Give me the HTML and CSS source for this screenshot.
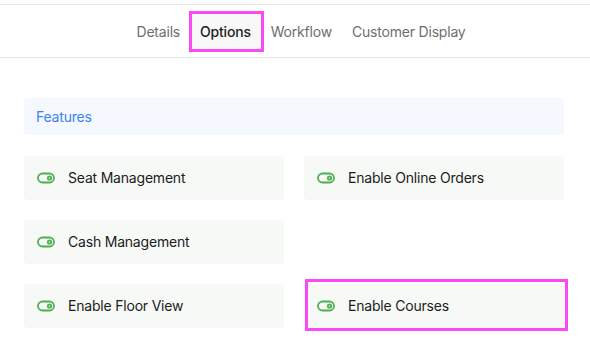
FILE: index.html
```html
<!DOCTYPE html>
<html lang="en">
<head>
    <meta charset="UTF-8">
    <meta name="viewport" content="width=device-width, initial-scale=1.0">
    <title>Options</title>
    <link rel="stylesheet" href="styles.css">
</head>
<body>
    <nav class="tabs">
        <span class="tab">Details</span>
        <span class="tab active">Options<span class="mark"></span></span>
        <span class="tab">Workflow</span>
        <span class="tab">Customer Display</span>
    </nav>

    <main class="content">
        <div class="section-title">Features</div>

        <div class="features">
            <div class="feature">
                <svg class="toggle" viewBox="0 0 18 12"><rect x="1" y="1.5" width="16" height="9" rx="4.5"/><circle cx="12.5" cy="6" r="1.7"/></svg>
                <span>Seat Management</span>
            </div>
            <div class="feature">
                <svg class="toggle" viewBox="0 0 18 12"><rect x="1" y="1.5" width="16" height="9" rx="4.5"/><circle cx="12.5" cy="6" r="1.7"/></svg>
                <span>Enable Online Orders</span>
            </div>
            <div class="feature">
                <svg class="toggle" viewBox="0 0 18 12"><rect x="1" y="1.5" width="16" height="9" rx="4.5"/><circle cx="12.5" cy="6" r="1.7"/></svg>
                <span>Cash Management</span>
            </div>
            <div class="empty"></div>
            <div class="feature">
                <svg class="toggle" viewBox="0 0 18 12"><rect x="1" y="1.5" width="16" height="9" rx="4.5"/><circle cx="12.5" cy="6" r="1.7"/></svg>
                <span>Enable Floor View</span>
            </div>
            <div class="feature">
                <svg class="toggle" viewBox="0 0 18 12"><rect x="1" y="1.5" width="16" height="9" rx="4.5"/><circle cx="12.5" cy="6" r="1.7"/></svg>
                <span>Enable Courses</span>
                <span class="mark mark-card"></span>
            </div>
        </div>
    </main>
</body>
</html>
```

FILE: styles.css
```css
body {
    margin: 0;
    font-family: Inter, "Noto Sans", sans-serif;
    font-size: 14px;
    letter-spacing: -0.2px;
    color: #1c1c1c;
    background: #fff;
}

.tabs {
    margin-top: 4px;
    height: 52px;
    border-top: 1px solid #e6e6e6;
    border-bottom: 1px solid #e6e6e6;
    display: flex;
    align-items: center;
    justify-content: center;
    padding-left: 12px;
}

.tab {
    position: relative;
    padding: 11px 10px;
    color: #6e6e6e;
}

.tab.active {
    color: #222;
    font-weight: 500;
    background: #f8f8f8;
}

/* pink annotation boxes */
.mark {
    position: absolute;
    border: 3px solid #fa4af7;
    pointer-events: none;
}

.tab .mark {
    top: -1px;
    bottom: -1px;
    left: -1px;
    right: -3px;
}

.mark-card {
    top: -5px;
    bottom: -3px;
    left: 1px;
    right: -4px;
}

.content {
    padding: 40px 26px 30px 24px;
}

.section-title {
    height: 37px;
    line-height: 37px;
    padding: 0 12px;
    background: #f5f9ff;
    color: #3d82f0;
    border-radius: 4px;
}

.features {
    margin-top: 21px;
    display: grid;
    grid-template-columns: 1fr 1fr;
    gap: 20px;
}

.feature {
    position: relative;
    height: 44px;
    padding: 0 13px 1px;
    display: flex;
    align-items: center;
    gap: 13px;
    background: #f7f9f7;
    border-radius: 4px;
    box-sizing: border-box;
}

.toggle {
    width: 18px;
    height: 12px;
    fill: none;
    stroke: #4caf50;
    stroke-width: 1.8;
}
```
